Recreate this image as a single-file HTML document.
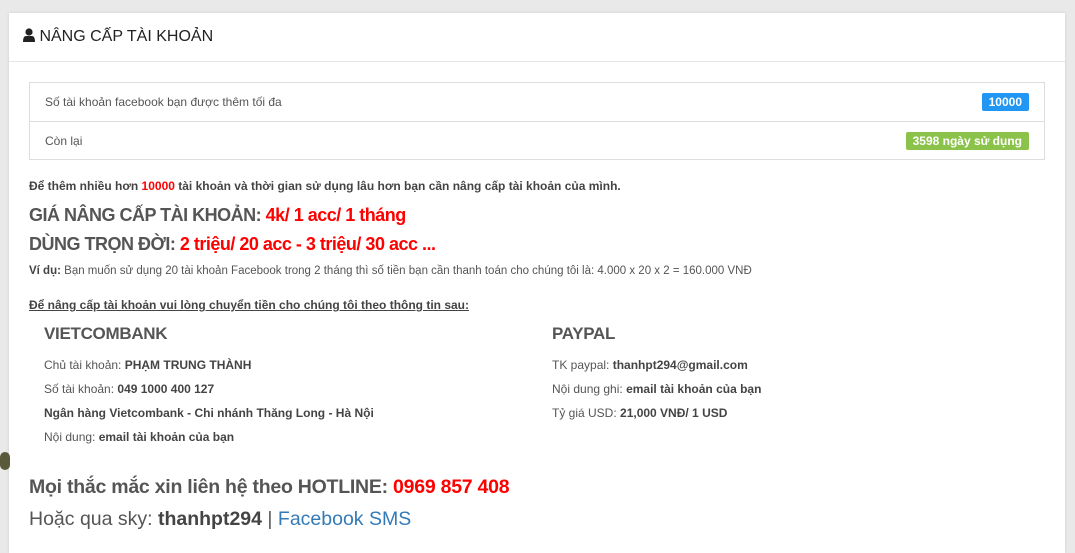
<!DOCTYPE html>
<html><head><meta charset="utf-8"><style>
body{margin:0;background:#e9e9e9;font-family:"Liberation Sans",sans-serif;color:#555;width:1075px;height:534px;overflow:hidden;position:relative}
.card{position:absolute;left:9px;top:13px;width:1056px;height:540px;background:#fff;box-shadow:0 0 3px rgba(0,0,0,.12)}
.hd{height:48px;border-bottom:1px solid #e6e6e6;font-size:16px;color:#222;line-height:48px;padding-left:14px}
.a{position:absolute;white-space:nowrap}
.tb{position:absolute;left:20px;top:69px;width:1014px;height:76px;border:1px solid #ddd}
.row{height:38px;line-height:38px;font-size:12px;padding-left:15px;position:relative}
.row+.row{border-top:1px solid #ddd}
.bd{position:absolute;right:15px;top:10px;height:18px;line-height:18px;padding:0 7px;color:#fff;font-weight:bold;font-size:12px;border-radius:2px}
.r{color:#f00}
b{color:#444}
.s{font-size:12px}
.big{font-size:18px;font-weight:bold;letter-spacing:-0.5px}
</style></head><body>
<div class="card">
<div class="hd"><svg width="12" height="14" viewBox="0 0 12 14" style="vertical-align:-1px"><circle cx="6" cy="4" r="3.6" fill="#222"/><path d="M0 14 Q0 8 3 8 L9 8 Q12 8 12 14Z" fill="#222"/></svg> NÂNG CẤP TÀI KHOẢN</div>
<div class="tb">
<div class="row">Số tài khoản facebook bạn được thêm tối đa<span class="bd" style="background:#2196f3">10000</span></div>
<div class="row">Còn lại<span class="bd" style="background:#8bc34a">3598 ngày sử dụng</span></div>
</div>
<div class="a s" style="left:20px;top:166px"><b>Để thêm nhiều hơn <span class="r">10000</span> tài khoản và thời gian sử dụng lâu hơn bạn cần nâng cấp tài khoản của mình.</b></div>
<div class="a big" style="left:20px;top:192px">GIÁ NÂNG CẤP TÀI KHOẢN: <span class="r">4k/ 1 acc/ 1 tháng</span></div>
<div class="a big" style="left:20px;top:221px">DÙNG TRỌN ĐỜI: <span class="r">2 triệu/ 20 acc - 3 triệu/ 30 acc ...</span></div>
<div class="a" style="left:20px;top:252px;font-size:11.5px"><b>Ví dụ:</b> Bạn muốn sử dụng 20 tài khoản Facebook trong 2 tháng thì số tiền bạn cần thanh toán cho chúng tôi là: 4.000 x 20 x 2 = 160.000 VNĐ</div>
<div class="a s" style="left:20px;top:285px;text-decoration:underline;font-weight:bold;color:#444">Để nâng cấp tài khoản vui lòng chuyển tiền cho chúng tôi theo thông tin sau:</div>
<div class="a big" style="left:35px;top:311px;font-size:17px;letter-spacing:-0.3px">VIETCOMBANK</div>
<div class="a s" style="left:35px;top:345px">Chủ tài khoản: <b>PHẠM TRUNG THÀNH</b></div>
<div class="a s" style="left:35px;top:369px">Số tài khoản: <b>049 1000 400 127</b></div>
<div class="a s" style="left:35px;top:393px"><b>Ngân hàng Vietcombank - Chi nhánh Thăng Long - Hà Nội</b></div>
<div class="a s" style="left:35px;top:417px">Nội dung: <b>email tài khoản của bạn</b></div>
<div class="a big" style="left:543px;top:311px;font-size:17px;letter-spacing:-0.3px">PAYPAL</div>
<div class="a s" style="left:543px;top:345px">TK paypal: <b>thanhpt294@gmail.com</b></div>
<div class="a s" style="left:543px;top:369px">Nội dung ghi: <b>email tài khoản của bạn</b></div>
<div class="a s" style="left:543px;top:393px">Tỷ giá USD: <b>21,000 VNĐ/ 1 USD</b></div>
<div class="a" style="left:20px;top:463px;font-size:19.5px;font-weight:bold;letter-spacing:-0.25px">Mọi thắc mắc xin liên hệ theo HOTLINE: <span class="r">0969 857 408</span></div>
<div class="a" style="left:20px;top:495px;font-size:19.5px">Hoặc qua sky: <b>thanhpt294</b> | <span style="color:#337ab7">Facebook SMS</span></div>
</div>
<div class="a" style="left:0;top:452px;width:10px;height:18px;background:#5a5a3a;border-radius:6px"></div>
</body></html>
